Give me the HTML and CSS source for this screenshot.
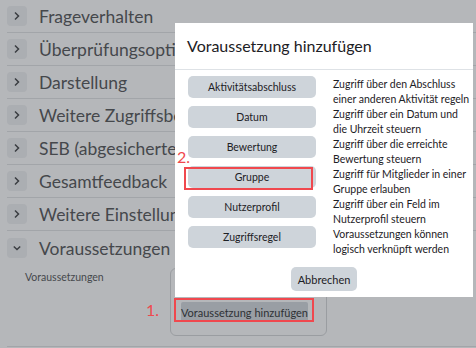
FILE: index.html
```html
<!DOCTYPE html>
<html lang="de">
<head>
<meta charset="utf-8">
<title>Voraussetzung hinzufügen</title>
<link rel="stylesheet" href="styles.css">
</head>
<body>
<div class="page">
  <ul class="sections">
    <li class="sec"><span class="chev"><svg width="8" height="10" viewBox="0 0 8 10"><path d="M2 1.5 L5.5 5 L2 8.5" fill="none" stroke="#3b3e42" stroke-width="1.5"/></svg></span><span class="sec-title">Frageverhalten</span></li>
    <li class="sec"><span class="chev"><svg width="8" height="10" viewBox="0 0 8 10"><path d="M2 1.5 L5.5 5 L2 8.5" fill="none" stroke="#3b3e42" stroke-width="1.5"/></svg></span><span class="sec-title">Überprüfungsoptionen</span></li>
    <li class="sec"><span class="chev"><svg width="8" height="10" viewBox="0 0 8 10"><path d="M2 1.5 L5.5 5 L2 8.5" fill="none" stroke="#3b3e42" stroke-width="1.5"/></svg></span><span class="sec-title">Darstellung</span></li>
    <li class="sec"><span class="chev"><svg width="8" height="10" viewBox="0 0 8 10"><path d="M2 1.5 L5.5 5 L2 8.5" fill="none" stroke="#3b3e42" stroke-width="1.5"/></svg></span><span class="sec-title">Weitere Zugriffsbeschränkungen</span></li>
    <li class="sec"><span class="chev"><svg width="8" height="10" viewBox="0 0 8 10"><path d="M2 1.5 L5.5 5 L2 8.5" fill="none" stroke="#3b3e42" stroke-width="1.5"/></svg></span><span class="sec-title">SEB (abgesicherter Browser)</span></li>
    <li class="sec"><span class="chev"><svg width="8" height="10" viewBox="0 0 8 10"><path d="M2 1.5 L5.5 5 L2 8.5" fill="none" stroke="#3b3e42" stroke-width="1.5"/></svg></span><span class="sec-title">Gesamtfeedback</span></li>
    <li class="sec"><span class="chev"><svg width="8" height="10" viewBox="0 0 8 10"><path d="M2 1.5 L5.5 5 L2 8.5" fill="none" stroke="#3b3e42" stroke-width="1.5"/></svg></span><span class="sec-title">Weitere Einstellungen</span></li>
    <li class="sec open"><span class="chev"><svg width="10" height="8" viewBox="0 0 10 8"><path d="M1.8 2.5 L5 5.5 L8.2 2.5" fill="none" stroke="#3b3e42" stroke-width="1.5"/></svg></span><span class="sec-title">Voraussetzungen</span></li>
  </ul>
  <div class="sec-body">
    <div class="field-label">Voraussetzungen</div>
    <div class="avail-box">
      <button class="btn dim">Voraussetzung hinzufügen</button>
    </div>
  </div>
</div>

<div class="modal">
  <div class="modal-header">Voraussetzung hinzufügen</div>
  <div class="modal-body">
    <div class="opt"><button class="btn">Aktivitätsabschluss</button><div class="desc">Zugriff über den Abschluss<br>einer anderen Aktivität regeln</div></div>
    <div class="opt"><button class="btn">Datum</button><div class="desc">Zugriff über ein Datum und<br>die Uhrzeit steuern</div></div>
    <div class="opt"><button class="btn">Bewertung</button><div class="desc">Zugriff über die erreichte<br>Bewertung steuern</div></div>
    <div class="opt"><button class="btn">Gruppe</button><div class="desc">Zugriff für Mitglieder in einer<br>Gruppe erlauben</div></div>
    <div class="opt"><button class="btn">Nutzerprofil</button><div class="desc">Zugriff über ein Feld im<br>Nutzerprofil steuern</div></div>
    <div class="opt"><button class="btn">Zugriffsregel</button><div class="desc">Voraussetzungen können<br>logisch verknüpft werden</div></div>
  </div>
  <div class="modal-footer"><button class="btn cancel">Abbrechen</button></div>
</div>

<div class="note note-1">1.</div>
<div class="note note-2">2.</div>
<div class="mark-box mark-1"></div>
<div class="mark-box mark-2"></div>
</body>
</html>
```

FILE: styles.css
```css
html, body {
  margin: 0;
  padding: 0;
}
body {
  width: 476px;
  height: 348px;
  overflow: hidden;
  background: #b5b7ba;
  font-family: Lato, "Open Sans", sans-serif;
  color: #45484c;
  position: relative;
}
.page {
  padding-left: 7px;
}
.sections {
  list-style: none;
  margin: 0;
  padding: 0;
}
.sec {
  height: 32px;
  border-bottom: 1px solid #a2a5a9;
  display: flex;
  align-items: center;
  gap: 12px;
  white-space: nowrap;
  overflow: hidden;
}
.sec.open {
  border-bottom: none;
  height: 34px;
}
.chev {
  width: 20px;
  height: 20px;
  flex: none;
  border-radius: 4px;
  background: #abaeb2;
  display: flex;
  align-items: center;
  justify-content: center;
}
.sec-title {
  font-size: 17.5px;
  color: #45484c;
  line-height: 20px;
  padding-top: 1px;
}
.sec-body {
  display: flex;
  padding-left: 18px;
  padding-top: 3px;
  height: 78px;
  border-bottom: 1px solid #a2a5a9;
}
.field-label {
  width: 145px;
  font-size: 10.5px;
  line-height: 14px;
  padding-top: 2px;
  color: #45484c;
}
.avail-box {
  width: 145px;
  height: 33px;
  border: 1px solid #9a9da1;
  border-radius: 6px;
  padding: 33px 0 0 10px;
}
.btn {
  font-family: Lato, "Open Sans", sans-serif;
  border: none;
  border-radius: 5px;
  background: #ced4da;
  color: #1d2125;
  font-size: 10.5px;
  padding: 0;
  height: 22px;
  width: 128px;
  display: block;
}
.btn.dim {
  background: #999ea4;
  color: #2e3135;
  width: 127px;
  height: 20px;
  border-radius: 2px;
  font-size: 11px;
}
.modal {
  position: absolute;
  left: 175px;
  top: 23px;
  width: 298px;
  height: 274px;
  background: #ffffff;
}
.modal-header {
  height: 47px;
  box-sizing: border-box;
  border-bottom: 1px solid #dee2e6;
  padding: 13px 0 0 12px;
  font-size: 16px;
  color: #1d2125;
  line-height: 20px;
}
.modal-body {
  padding: 6px 4px 0 13px;
}
.opt {
  display: flex;
  gap: 17px;
  height: 30px;
  align-items: flex-start;
}
.opt .btn {
  flex: none;
}
.desc {
  font-size: 10.5px;
  line-height: 14.5px;
  color: #1d2125;
  padding-top: 1px;
  white-space: nowrap;
}
.modal-footer {
  display: flex;
  justify-content: center;
  padding-top: 11px;
}
.btn.cancel {
  width: 66px;
  height: 24px;
  font-size: 11px;
}
.note {
  position: absolute;
  color: #f0484e;
  font-size: 16px;
  line-height: 16px;
  font-family: Lato, "Open Sans", sans-serif;
}
.note-1 {
  left: 146px;
  top: 302px;
}
.note-2 {
  left: 177px;
  top: 149px;
}
.mark-box {
  position: absolute;
  border: 2.5px solid #f0484e;
}
.mark-1 {
  left: 174px;
  top: 298px;
  width: 136px;
  height: 20px;
}
.mark-2 {
  left: 184px;
  top: 167px;
  width: 125px;
  height: 19px;
}
```
